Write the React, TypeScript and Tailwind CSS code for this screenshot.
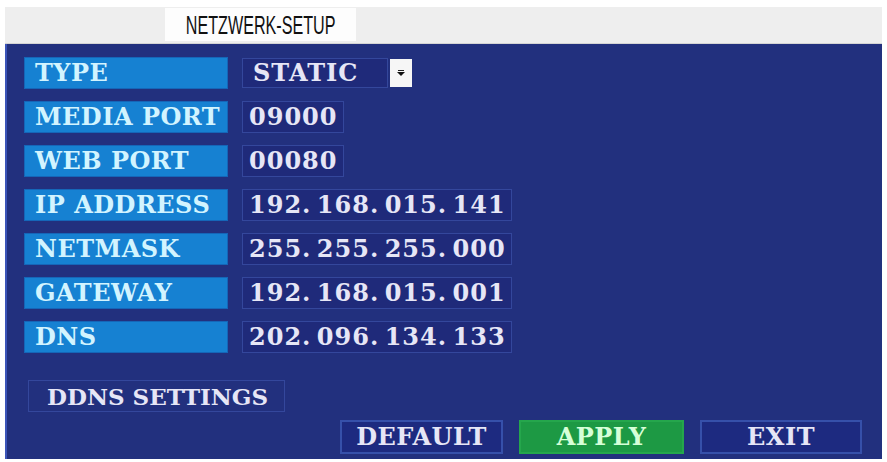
const rows: { label: string; value: string; kind: 'select' | 'port' | 'ip' }[] = [
  { label: 'TYPE', value: 'STATIC', kind: 'select' },
  { label: 'MEDIA PORT', value: '09000', kind: 'port' },
  { label: 'WEB PORT', value: '00080', kind: 'port' },
  { label: 'IP ADDRESS', value: '192. 168. 015. 141', kind: 'ip' },
  { label: 'NETMASK', value: '255. 255. 255. 000', kind: 'ip' },
  { label: 'GATEWAY', value: '192. 168. 015. 001', kind: 'ip' },
  { label: 'DNS', value: '202. 096. 134. 133', kind: 'ip' },
]

const osd = "font-['DejaVu_Serif',serif] font-bold text-[24px] tracking-[0.5px] leading-none whitespace-nowrap"

function IpText({ value }: { value: string }) {
  const parts = value.split('. ')
  return (
    <span className="whitespace-pre tracking-[1px]">
      {parts.map((p, i) => (
        <span key={i}>
          {p}
          {i < parts.length - 1 && <span className="tracking-[-1px]">{'. '}</span>}
        </span>
      ))}
    </span>
  )
}

function ValueBox({ value, kind }: { value: string; kind: string }) {
  if (kind === 'select') {
    return (
      <div className="flex items-center gap-[2px]">
        <div className="w-[146px] h-[30px] border border-[#34479c] bg-[#1f2a7a] flex items-center pl-[10px] text-[#e6e6f6] tracking-[1px]">
          {value}
        </div>
        <div className="w-[22px] h-[28px] bg-[#f6f6f6] flex items-center justify-center">
          <svg width="10" height="8" viewBox="0 0 10 8">
            <rect x="2" y="1" width="6" height="1" fill="#222" />
            <polygon points="1,3 9,3 5,7" fill="#111" />
          </svg>
        </div>
      </div>
    )
  }
  return (
    <div
      className={
        (kind === 'ip' ? 'w-[270px] pl-[6px]' : 'w-[102px] pl-[6px] tracking-[1px]') +
        ' h-[32px] border border-[#34479c] bg-[#1f2a7a] flex items-center text-[#e6e6f6]'
      }
    >
      {kind === 'ip' ? <IpText value={value} /> : value}
    </div>
  )
}

export default function App() {
  return (
    <div className="w-[887px] h-[462px] bg-white pt-[7px] px-[5px] overflow-hidden">
      <div className="h-[37px] bg-[#eeeeee] border-b border-[#d4d4d4] relative">
        <div className="absolute left-[160px] top-[1px] w-[191px] h-[33px] bg-[#fdfdfd] flex items-center justify-center overflow-visible">
          <span className="inline-block whitespace-nowrap scale-x-[0.62] font-['Liberation_Sans',Arial,sans-serif] text-[26px] text-[#111] leading-none">
            NETZWERK-SETUP
          </span>
        </div>
      </div>
      <div className={`h-[415px] bg-[#22307e] border-l-2 border-[#3b54b8] pt-[13px] pl-[17px] pr-[20px] flex flex-col ${osd}`}>
        <div className="flex flex-col gap-[12px]">
          {rows.map((r) => (
            <div key={r.label} className="flex items-center gap-[14px] h-[32px]">
              <div className="w-[204px] h-[32px] bg-[#1681d2] border border-[#1566b8] flex items-center pl-[10px] text-[#d2f4ff]">
                {r.label}
              </div>
              <ValueBox value={r.value} kind={r.kind} />
            </div>
          ))}
        </div>
        <div className="mt-[27px] ml-[4px] w-[257px] h-[32px] border border-[#34479c] flex items-center pl-[18px] text-[#e6e6f6] text-[23px] tracking-[0px]">
          DDNS SETTINGS
        </div>
        <div className="mt-[8px] flex justify-end gap-[16px]">
          <button className="w-[163px] h-[34px] border-2 border-[#3650aa] bg-[#1d2a80] text-[#e6e6f6] flex items-center justify-center">
            DEFAULT
          </button>
          <button className="w-[165px] h-[34px] border-2 border-[#25a64c] bg-[#1d9944] text-[#d6ffd8] flex items-center justify-center">
            APPLY
          </button>
          <button className="w-[162px] h-[34px] border-2 border-[#3650aa] bg-[#1d2a80] text-[#e6e6f6] flex items-center justify-center">
            EXIT
          </button>
        </div>
      </div>
    </div>
  )
}
